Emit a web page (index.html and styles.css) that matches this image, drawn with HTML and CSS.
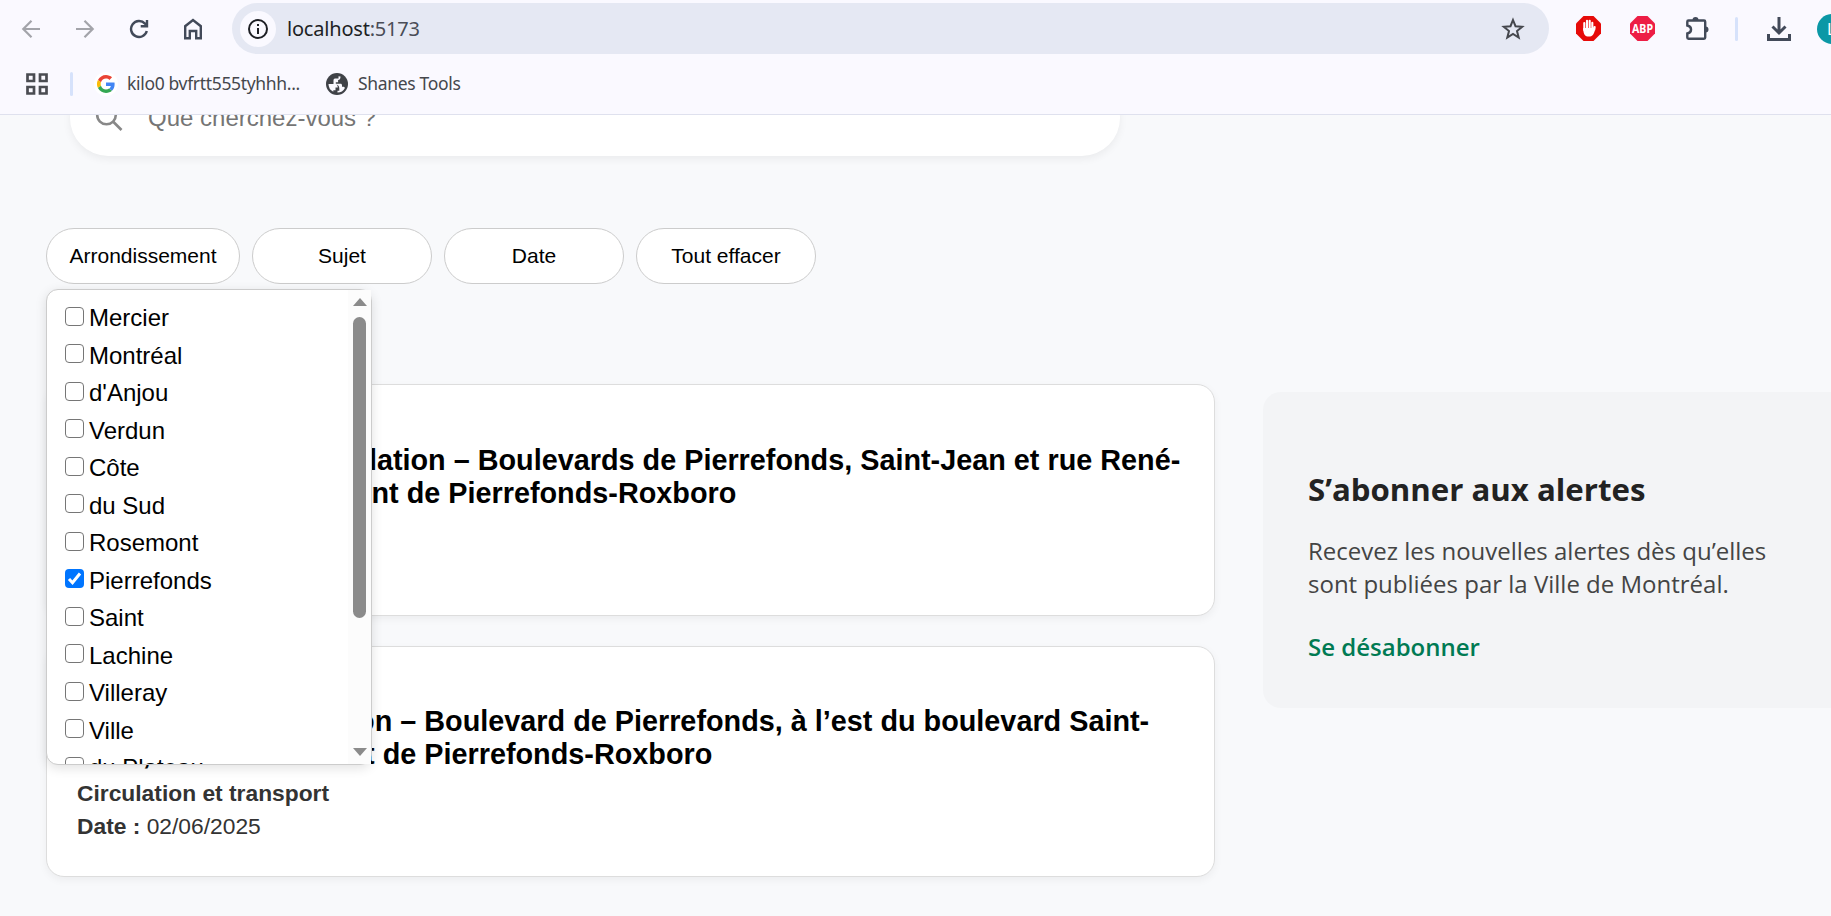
FILE: index.html
```html
<!DOCTYPE html>
<html lang="fr">
<head>
<meta charset="utf-8">
<title>Alertes</title>
<link rel="stylesheet" href="styles.css">
</head>
<body>
<header class="browser">
  <div class="toolbar">
    <div class="nav">
      <svg class="muted" width="20" height="20" viewBox="0 0 20 20"><path d="M19 10H2.500M10.500 1.800 2.300 10l8.200 8.200" /></svg>
      <svg class="muted" width="20" height="20" viewBox="0 0 20 20"><path d="M1 10h16.500M9.500 1.800 17.700 10 9.500 18.200" /></svg>
      <svg width="20" height="20" viewBox="0 0 20 20"><path d="M17.800 12A8 8 0 1 1 16 4.600L18 6.800M18 1v6.300h-6.300" /></svg>
      <svg width="20" height="22" viewBox="0 0 20 22"><path d="M2.200 20.300V8.200L10 2l7.800 6.200v12.100h-4.600v-7.300H6.800v7.300z" /></svg>
    </div>
    <div class="address">
      <span class="info"><svg width="22" height="22" viewBox="0 0 22 22"><circle cx="11" cy="11" r="9"/><path d="M11 10v6M11 6v2"/></svg></span>
      <span class="url">localhost<span class="port">:5173</span></span>
      <svg class="star" width="24" height="24" viewBox="0 0 24 24"><path d="m12 3 2.500 6.200 6.700.5-5.200 4.300 1.700 6.600-5.700-3.600-5.700 3.600L8 14 2.800 9.700l6.700-.5z"/></svg>
    </div>
    <div class="extensions">
      <svg width="25" height="25" viewBox="0 0 25 25"><path class="ublock" d="M7.500 0h10L25 7.500v10L17.500 25h-10L0 17.500v-10z"/><path class="hand" d="M8.300 14V7M11 12V4.700M13.700 12V4.700M16.300 13V6.800M18.300 13.500l.3-2.500"/><path class="palm" d="M7.200 12h10.300l1.600-1.500c.4 4-1.600 10-5.100 10h-2.500c-3 0-4.300-4-4.300-8.500z"/></svg>
      <svg width="25" height="25" viewBox="0 0 25 25"><path class="abp" d="M7.500 0h10L25 7.500v10L17.500 25h-10L0 17.500v-10z"/><text class="abp-text" x="12.500" y="17" textLength="21" lengthAdjust="spacingAndGlyphs">ABP</text></svg>
      <svg width="26" height="26" viewBox="0 0 26 26"><path d="M4.500 4.500h15.500a1.200 1.200 0 0 1 1.200 1.200v15.900a1.200 1.200 0 0 1-1.200 1.200H4.500a1.200 1.200 0 0 1-1.200-1.200v-4.100c5-1 5-7 0-8V5.700a1.200 1.200 0 0 1 1.200-1.200z"/><path class="solid" d="M8.500 4a3 3 0 0 1 6 0zM21.500 10.500a3 3 0 0 1 0 6z"/></svg>
      <i class="divider"></i>
      <svg width="26" height="26" viewBox="0 0 26 26"><path class="heavy" d="M13 1v15M6.500 10.500 13 17l6.500-6.500M2.500 18v5.500h21V18"/></svg>
      <span class="avatar">L</span>
    </div>
  </div>
  <div class="bookmarks">
    <svg class="apps" width="22" height="22" viewBox="0 0 22 22"><path d="M1.500 1.500h6.500v6.500H1.500zM14 1.500h6.500v6.500H14zM1.500 14h6.500v6.500H1.500zM14 14h6.500v6.500H14z"/></svg>
    <i class="divider"></i>
    <span class="google"><svg width="18" height="18" viewBox="0 0 48 48"><path fill="#ea4335" d="M24 9.500c3.540 0 6.710 1.220 9.210 3.600l6.850-6.850C35.900 2.380 30.470 0 24 0 14.620 0 6.510 5.380 2.560 13.220l7.980 6.190C12.430 13.720 17.740 9.500 24 9.500z"/><path fill="#4285f4" d="M46.980 24.550c0-1.570-.15-3.090-.38-4.550H24v9.020h12.940c-.58 2.960-2.260 5.480-4.780 7.180l7.730 6c4.510-4.180 7.090-10.360 7.090-17.650z"/><path fill="#fbbc05" d="M10.530 28.590a14.500 14.500 0 0 1 0-9.180l-7.980-6.190a24 24 0 0 0 0 21.560z"/><path fill="#34a853" d="M24 48c6.480 0 11.930-2.130 15.890-5.810l-7.730-6c-2.150 1.450-4.920 2.300-8.160 2.300-6.260 0-11.570-4.220-13.470-9.910l-7.980 6.190C6.510 42.620 14.620 48 24 48z"/></svg></span>
    <span class="bm-first">kilo0 bvfrtt555tyhhh...</span>
    <svg class="globe" width="22" height="22" viewBox="0 0 22 22"><circle cx="11" cy="11" r="11"/><path d="M2.500 11h5.700c2.300 0 3.600 1.400 3.600 3.600h-2.300v2.600H7.300v1.500A8.500 8.500 0 0 1 2.500 11zM9 5.500h3.500V3.200l2 .2c0 2-.6 3.600-2.400 3.600v2.200H9.800v1.500h4.700c1 0 1.500.7 1.500 1.600v1.500h1.400c.7 0 1.200.5 1.500 1.100a8.500 8.500 0 0 1-7.400 4.600v-1.800h1.800v-2.200c0-2.700-1.400-4-4-4H7.500V7.500C7.500 6.300 8 5.500 9 5.500z"/></svg>
    <span class="bm-second">Shanes Tools</span>
  </div>
</header>
<main class="page">
  <div class="search">
    <svg width="28" height="32" viewBox="0 0 28 32"><circle cx="11.500" cy="14" r="9.300"/><path d="m18 20.500 8.500 8.500"/></svg>
    <span>Que cherchez-vous ?</span>
  </div>
  <div class="filters">
    <button class="filter first">Arrondissement</button>
    <button class="filter">Sujet</button>
    <button class="filter">Date</button>
    <button class="filter">Tout effacer</button>
    <div class="menu">
      <div class="options">
        <label class="option"><i class="box"></i>Mercier</label>
        <label class="option"><i class="box"></i>Montréal</label>
        <label class="option"><i class="box"></i>d'Anjou</label>
        <label class="option"><i class="box"></i>Verdun</label>
        <label class="option"><i class="box"></i>Côte</label>
        <label class="option"><i class="box"></i>du Sud</label>
        <label class="option"><i class="box"></i>Rosemont</label>
        <label class="option"><i class="box checked"><svg width="19" height="19" viewBox="0 0 19 19"><path d="m4 10 3.500 3.800L15 4.500"/></svg></i>Pierrefonds</label>
        <label class="option"><i class="box"></i>Saint</label>
        <label class="option"><i class="box"></i>Lachine</label>
        <label class="option"><i class="box"></i>Villeray</label>
        <label class="option"><i class="box"></i>Ville</label>
        <label class="option"><i class="box"></i>du Plateau</label>
      </div>
      <div class="scrollbar"><i class="up"></i><i class="thumb"></i><i class="down"></i></div>
    </div>
  </div>
  <div class="columns">
    <div class="alerts">
      <article class="card">
        <h2><span class="kind">Interruption</span> à la circulation – Boulevards de Pierrefonds, Saint-Jean et rue René-<br>Émard, arrondissement de Pierrefonds-Roxboro</h2>
        <p><b>Circulation et transport</b></p>
        <p><b>Date :</b> 02/06/2025</p>
      </article>
      <article class="card second">
        <h2>Entrave à la circulation – Boulevard de Pierrefonds, à l’est du boulevard Saint-<br>Jean, arrondissement de Pierrefonds-Roxboro</h2>
        <p><b>Circulation et transport</b></p>
        <p><b>Date :</b> 02/06/2025</p>
      </article>
    </div>
    <aside class="subscribe">
      <h3>S’abonner aux alertes</h3>
      <p>Recevez les nouvelles alertes dès qu’elles<br>sont publiées par la Ville de Montréal.</p>
      <a>Se désabonner</a>
    </aside>
  </div>
</main>
</body>
</html>
```
FILE: styles.css
```css
* { box-sizing: border-box; }
body { margin: 0; width: 1831px; height: 916px; overflow: hidden; background: #f8f9fb; font-family: "Liberation Sans", Arial, sans-serif; }
svg { display: block; flex: none; fill: none; stroke: #424a59; stroke-width: 2.4; }
h2, h3, p { margin: 0; }

.browser { height: 115px; background: #faf9ff; border-bottom: 1px solid #dfe1ee; font-family: "Noto Sans", "Open Sans", sans-serif; overflow: hidden; }
.toolbar { display: flex; align-items: center; height: 57px; }
.nav { display: flex; flex: none; align-items: center; gap: 34px; width: 232px; padding-left: 21px; }
.nav .muted { stroke: #a3a4aa; stroke-width: 2.200; }
.address { display: flex; flex: none; align-items: center; width: 1317px; height: 51px; padding: 0 24px 0 8px; border-radius: 26px; background: #e5e8f3; }
.info { display: grid; place-items: center; width: 36px; height: 36px; border-radius: 50%; background: #faf9ff; }
.info svg { stroke: #1d1f24; stroke-width: 2; }
.url { margin-left: 11px; font-size: 20px; letter-spacing: -.2px; color: #1d1f24; white-space: nowrap; }
.port { color: #4a4d57; }
.star { margin-left: auto; stroke: #45474d; stroke-width: 2; }
.extensions { display: flex; align-items: center; flex: none; padding-left: 27px; }
.extensions > svg + svg { margin-left: 29px; }
.extensions .ublock { fill: #e60b09; stroke: none; }
.hand { stroke: #fff; stroke-width: 2.100; stroke-linecap: round; }
.palm { fill: #fff; stroke: none; }
.abp { fill: #ed1e45; stroke: none; }
.abp-text { fill: #fff; stroke: none; font-size: 12px; font-weight: 700; text-anchor: middle; }
.solid { fill: #424a59; stroke: none; }
.heavy { stroke-width: 3; }
.divider { width: 3px; height: 24px; border-radius: 2px; background: #d6e2fb; }
.extensions .divider { margin: 0 28px 0 25px; }
.avatar { display: grid; align-items: center; width: 30px; height: 30px; margin-left: 25px; padding-left: 10px; border-radius: 50%; background: #0b98a6; color: #fff; font-size: 16px; }

.bookmarks { display: flex; align-items: center; height: 54px; padding-left: 26px; font-size: 17.500px; letter-spacing: -.33px; color: #45474d; white-space: nowrap; }
.apps { stroke: #4a4c52; stroke-width: 2.700; }
.bookmarks .divider { margin: 0 21px 0 22px; }
.google { display: grid; place-items: center; width: 24px; height: 24px; border-radius: 50%; background: #fff; }
.google svg, .globe { stroke: none; }
.bm-first { width: 174px; margin: -2px 25px 0 9px; }
.globe circle { fill: #3f4247; }
.globe path { fill: #faf9ff; }
.bm-second { margin: -2px 0 0 10px; }

.page { height: 801px; overflow: hidden; }
.search { display: flex; align-items: center; gap: 25px; width: 1050px; height: 76px; margin: -35px 0 0 70px; padding: 0 25px; border-radius: 38px; background: #fff; box-shadow: 0 3px 9px rgba(0, 0, 0, .06); font-size: 24px; color: #757575; }
.search svg { margin-bottom: 2px; stroke: #888; stroke-width: 2.600; }
.filters { position: relative; display: flex; gap: 12px; margin: 72px 0 0 46px; }
.filter { width: 180px; height: 56px; padding: 0; border: 1px solid #ccc; border-radius: 30px; background: #fff; font: 21px "Liberation Sans", Arial, sans-serif; color: #000; }
.filter.first { width: 194px; }

.menu { position: absolute; z-index: 2; top: 61px; left: 0; display: flex; width: 326px; height: 476px; border: 1px solid #ccc; border-radius: 12px; background: #fff; box-shadow: 0 3px 12px rgba(0, 0, 0, .12); }
.options { flex: 1; padding: 9px 0 0 18px; overflow: hidden; }
.option { display: flex; align-items: center; height: 37.500px; font-size: 24px; line-height: 27px; color: #000; }
.box { width: 19px; height: 19px; margin: -3px 5px 0 0; border: 1.500px solid #767676; border-radius: 4px; background: #fff; }
.box.checked { border: 0; background: #0075ff; }
.box svg { stroke: #fff; stroke-width: 3; }
.scrollbar { display: flex; flex-direction: column; align-items: center; width: 23px; padding-top: 8px; background: #fcfcfc; }
.up, .down { border: solid transparent; border-width: 0 7.500px; }
.up { border-bottom: 8px solid #8b8b8b; }
.thumb { width: 13px; height: 301px; margin: 11px 0 130px; border-radius: 7px; background: #8b8b8b; }
.down { border-top: 8px solid #8b8b8b; }

.columns { display: flex; align-items: flex-start; gap: 48px; margin: 100px 0 0 46px; }
.alerts { display: flex; flex-direction: column; gap: 30px; flex: none; width: 1169px; }
.card { height: 232px; padding: 59px 30px 0; border: 1px solid #ddd; border-radius: 18px; background: #fff; box-shadow: 0 3px 9px rgba(0, 0, 0, .05); white-space: nowrap; }
.card.second { height: 231px; padding-top: 58px; }
.card h2 { margin-bottom: 6px; font-size: 28.800px; line-height: 33px; color: #000; }
.card p { font-size: 22.800px; line-height: 33px; color: #333; }
.kind { margin-right: -2.500px; }
.subscribe { flex: none; width: 600px; height: 316px; margin-top: 8px; padding: 76px 45px 0; border-radius: 18px; background: #f3f4f6; font-family: "Open Sans", "Noto Sans", sans-serif; white-space: nowrap; }
.subscribe h3 { font-size: 31.200px; line-height: 42px; color: #222; }
.subscribe p { margin: 24px 0 30px; font-size: 24px; line-height: 33px; color: #444; }
.subscribe a { font-size: 24px; line-height: 33px; font-weight: 600; color: #007a53; }
```
